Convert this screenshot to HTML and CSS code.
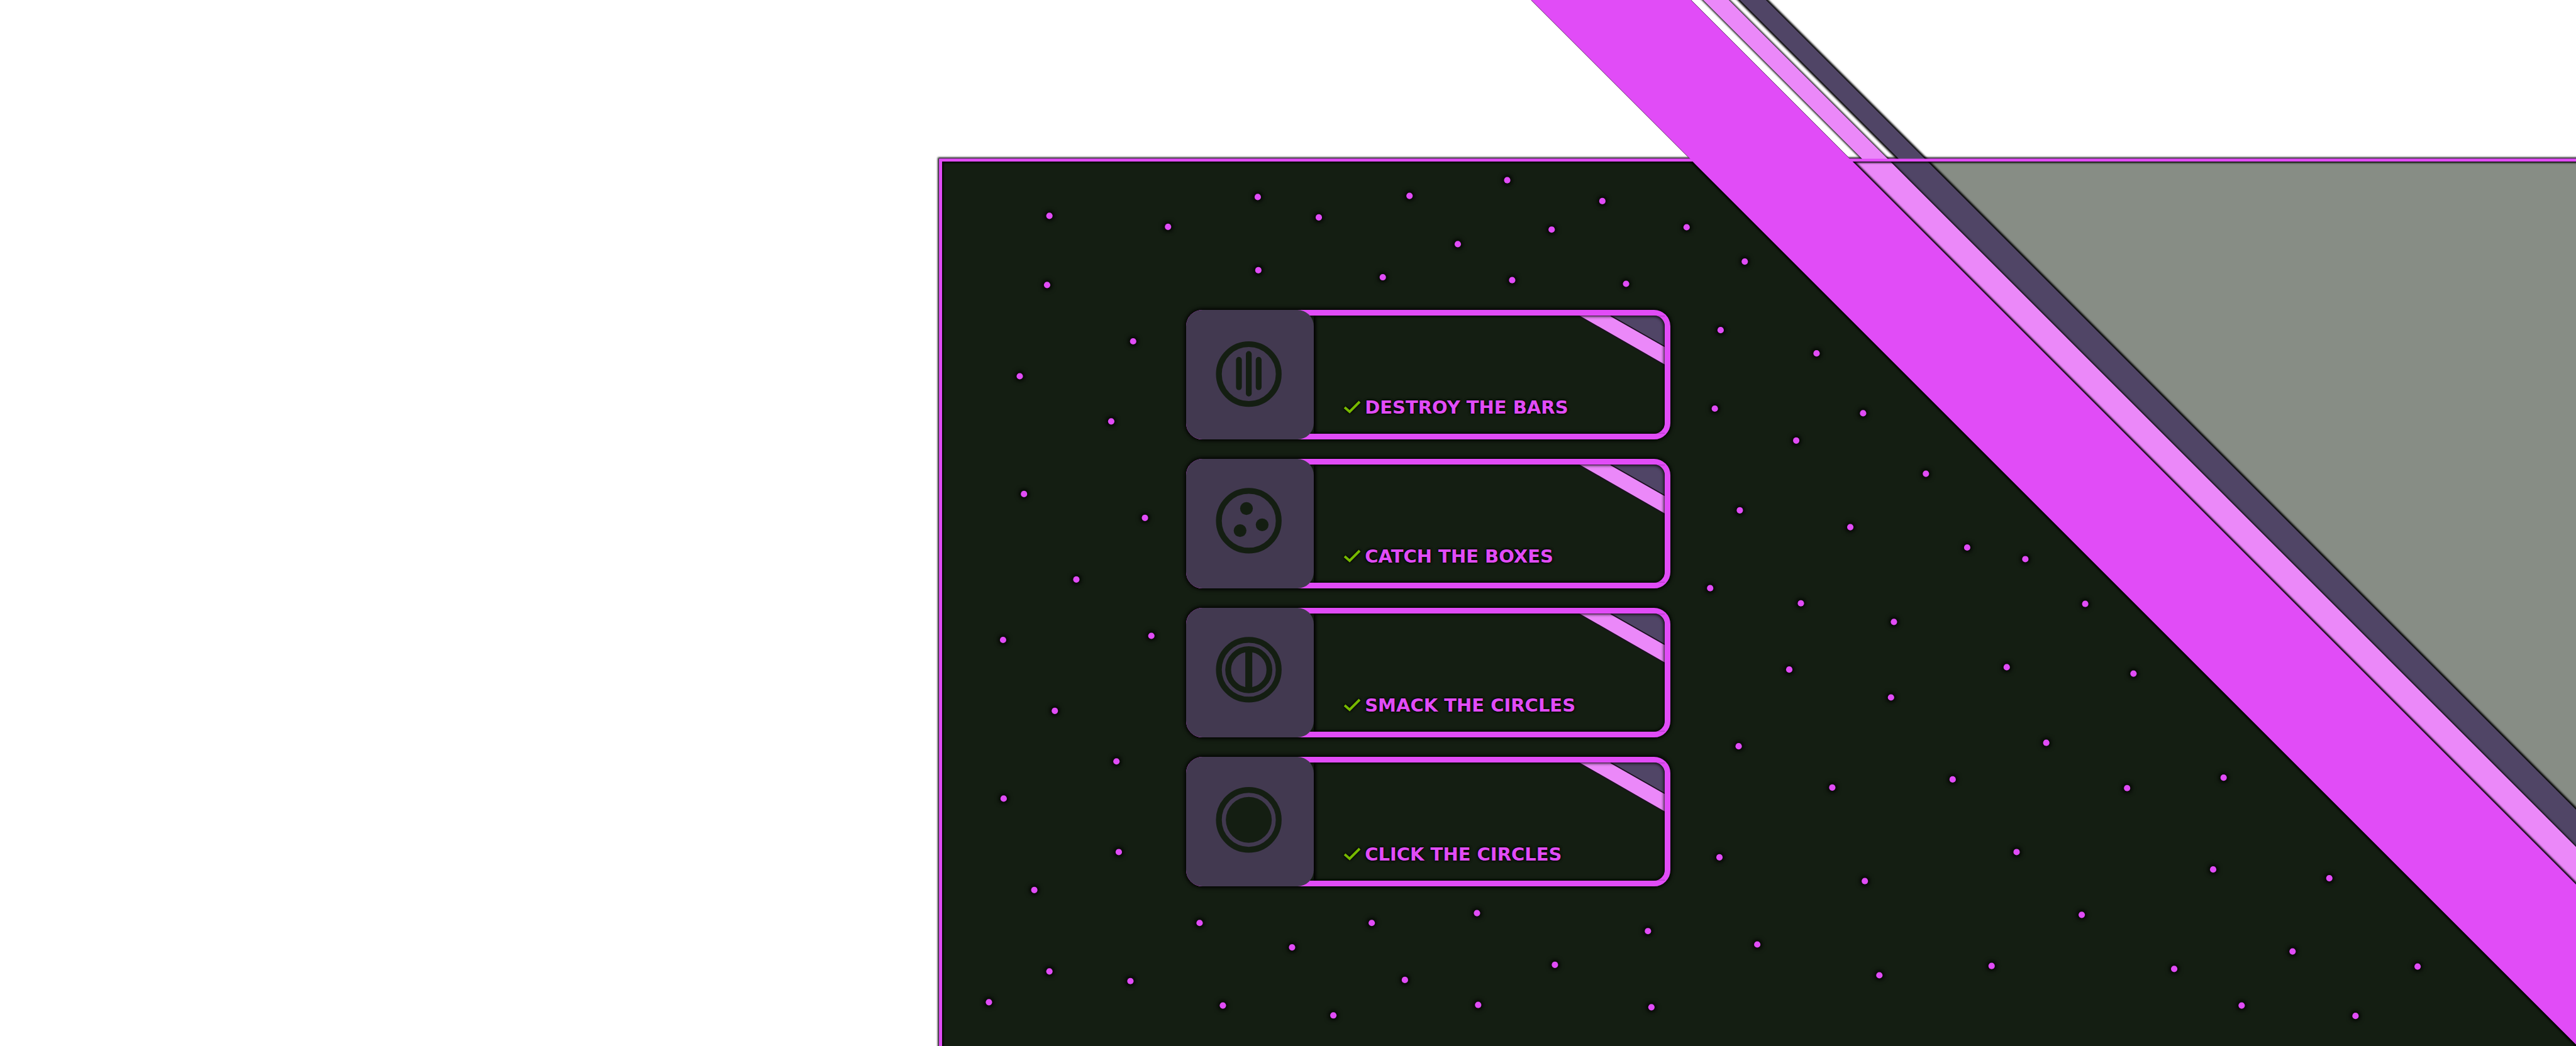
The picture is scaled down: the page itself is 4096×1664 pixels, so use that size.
FILE: index.html
```html
<!DOCTYPE html>
<html lang="en">
<head>
<meta charset="utf-8">
<title>Objectives</title>
<link rel="stylesheet" href="styles.css">
</head>
<body>
<main class="stage">
  <svg class="backdrop" viewBox="0 0 4430 1800" preserveAspectRatio="xMinYMin slice" aria-hidden="true">
    <defs>
      <filter id="soft" x="-5%" y="-5%" width="110%" height="110%" color-interpolation-filters="sRGB">
        <feMorphology in="SourceAlpha" operator="dilate" radius="1"/>
        <feGaussianBlur stdDeviation="2"/>
        <feMerge><feMergeNode/><feMergeNode in="SourceGraphic"/></feMerge>
      </filter>
      <filter id="hard" x="-5%" y="-5%" width="110%" height="110%" color-interpolation-filters="sRGB">
        <feMorphology in="SourceAlpha" operator="dilate" radius="2"/>
        <feGaussianBlur stdDeviation="2"/>
        <feMerge><feMergeNode/><feMergeNode in="SourceGraphic"/></feMerge>
      </filter>
      <filter id="halo" filterUnits="userSpaceOnUse" x="1600" y="260" width="2830" height="1540" color-interpolation-filters="sRGB">
        <feMorphology in="SourceAlpha" operator="dilate" radius="2"/>
        <feGaussianBlur stdDeviation="4"/>
        <feMerge><feMergeNode/><feMergeNode in="SourceGraphic"/></feMerge>
      </filter>
      <clipPath id="above"><rect width="4430" height="275"/></clipPath>
      <clipPath id="inside"><rect x="1618" y="276" width="2812" height="1524"/></clipPath>
    </defs>

    <!-- page background stripes -->
    <path class="edge" filter="url(#hard)" d="M4500 275.500H1617.500V1900"/>
    <path class="paper" d="M1620 278H4430V1800H1620z"/>
    <g clip-path="url(#above)">
      <path class="light" filter="url(#soft)" d="M2909-20H2953L3266 293H3222z"/>
      <path class="slate" filter="url(#hard)" d="M2972-20H3017L3330 293H3285z"/>
    </g>

    <!-- panel interior -->
    <g clip-path="url(#inside)">
      <path class="haze" d="M1620 278H4430V1800H1620z"/>
      <path class="slate" filter="url(#hard)" d="M2883 250H3287L4887 1850H4483z"/>
      <path class="light" filter="url(#soft)" d="M2883 250H3223L4823 1850H4483z"/>
      <path class="night" d="M1620 278H2911L4433 1800H1620z"/>
      <path class="bright" filter="url(#hard)" d="M2883 250H3158L4758 1850H4483z"/>
      <path class="edge" filter="url(#hard)" d="M4500 275.500H1617.500V1900"/>
      <g class="bright" filter="url(#halo)">
        <circle cx="1804.700" cy="371.300" r="5.500"/><circle cx="2008.700" cy="390.300" r="5.500"/><circle cx="1800.700" cy="490.300" r="5.500"/><circle cx="1948.700" cy="587.300" r="5.500"/><circle cx="1753.700" cy="647.300" r="5.500"/>
        <circle cx="2163" cy="339" r="5.500"/><circle cx="2268" cy="374" r="5.500"/><circle cx="2424" cy="337" r="5.500"/><circle cx="2592" cy="310" r="5.500"/><circle cx="2507" cy="420" r="5.500"/>
        <circle cx="2164" cy="465" r="5.500"/><circle cx="2378" cy="477" r="5.500"/><circle cx="2600.500" cy="482" r="5.500"/><circle cx="2668.400" cy="395" r="5.500"/><circle cx="2755.600" cy="346" r="5.500"/>
        <circle cx="2900.500" cy="391" r="5.500"/><circle cx="3000.500" cy="450" r="5.500"/><circle cx="2796.400" cy="488.300" r="5.500"/><circle cx="1911" cy="725" r="5.500"/><circle cx="1761" cy="850" r="5.500"/>
        <circle cx="1969" cy="891" r="5.500"/><circle cx="1851" cy="997" r="5.500"/><circle cx="1725" cy="1101" r="5.500"/><circle cx="1980" cy="1094" r="5.500"/><circle cx="1814" cy="1223" r="5.500"/>
        <circle cx="1920" cy="1310" r="5.500"/><circle cx="1726" cy="1374" r="5.500"/><circle cx="1924" cy="1466" r="5.500"/><circle cx="1778.700" cy="1531.300" r="5.500"/><circle cx="1804.700" cy="1671.300" r="5.500"/>
        <circle cx="1700.700" cy="1724.300" r="5.500"/><circle cx="1944" cy="1688" r="5.500"/><circle cx="2063" cy="1588" r="5.500"/><circle cx="2103" cy="1730" r="5.500"/><circle cx="2222" cy="1630" r="5.500"/>
        <circle cx="2293" cy="1747" r="5.500"/><circle cx="2359" cy="1588" r="5.500"/><circle cx="2416" cy="1686" r="5.500"/><circle cx="2540" cy="1571" r="5.500"/><circle cx="2542" cy="1729" r="5.500"/>
        <circle cx="2674" cy="1660" r="5.500"/><circle cx="2834" cy="1602" r="5.500"/><circle cx="2840" cy="1733" r="5.500"/><circle cx="2957" cy="1475" r="5.500"/><circle cx="3022" cy="1625" r="5.500"/>
        <circle cx="2990" cy="1284" r="5.500"/><circle cx="2941" cy="1012" r="5.500"/><circle cx="2992" cy="878" r="5.500"/><circle cx="2949" cy="703" r="5.500"/><circle cx="2959" cy="568" r="5.500"/>
        <circle cx="3124" cy="608" r="5.500"/><circle cx="3204" cy="711" r="5.500"/><circle cx="3089" cy="758" r="5.500"/><circle cx="3312" cy="815" r="5.500"/><circle cx="3182" cy="907" r="5.500"/>
        <circle cx="3383" cy="942" r="5.500"/><circle cx="3483" cy="962" r="5.500"/><circle cx="3097" cy="1038" r="5.500"/><circle cx="3257" cy="1070" r="5.500"/><circle cx="3586" cy="1039" r="5.500"/>
        <circle cx="3077" cy="1152" r="5.500"/><circle cx="3252" cy="1200" r="5.500"/><circle cx="3451" cy="1148" r="5.500"/><circle cx="3669" cy="1159" r="5.500"/><circle cx="3519" cy="1278" r="5.500"/>
        <circle cx="3151" cy="1355" r="5.500"/><circle cx="3358" cy="1341" r="5.500"/><circle cx="3658" cy="1356" r="5.500"/><circle cx="3824" cy="1338" r="5.500"/><circle cx="3207" cy="1516" r="5.500"/>
        <circle cx="3468" cy="1466" r="5.500"/><circle cx="3806" cy="1496" r="5.500"/><circle cx="4005.800" cy="1511" r="5.500"/><circle cx="3580" cy="1574" r="5.500"/><circle cx="3232" cy="1678" r="5.500"/>
        <circle cx="3425" cy="1662" r="5.500"/><circle cx="3739" cy="1667" r="5.500"/><circle cx="3855" cy="1730" r="5.500"/><circle cx="3942.600" cy="1637" r="5.500"/><circle cx="4050.800" cy="1748" r="5.500"/>
        <circle cx="4157.600" cy="1663" r="5.500"/>
      </g>
    </g>
    <path class="edge" d="M4430 275.500H1617.500V1800"/>
    <path class="bright" d="M2633 0H2908L4708 1800H4433z"/>
    <path class="hairline" d="M2633 0L2906 273M2908 0L3181 273"/>
  </svg>

  <ul class="objectives">
    <li class="card">
      <div class="tile">
        <svg class="icon" viewBox="0 0 219 223" aria-hidden="true">
          <circle class="ring" cx="107.500" cy="110.500" r="51.500"/>
          <path class="bar" d="M90.500 86v47M107.500 76v68M124.500 86v47"/>
        </svg>
      </div>
      <div class="body">
        <svg class="check" viewBox="0 0 28 20" aria-hidden="true"><path d="M2 10L10 17L26 1"/></svg>
        <span class="label">DESTROY THE BARS</span>
      </div>
      <div class="corner"><svg class="ribbon" viewBox="0 0 148 86" aria-hidden="true"><path class="slate" d="M56 0H148V53z"/><path class="light" d="M0 0H55L148 53V85z"/><path class="seam" d="M55 0L148 53M0 0L148 85"/></svg></div>
    </li>
    <li class="card">
      <div class="tile">
        <svg class="icon" viewBox="0 0 219 223" aria-hidden="true">
          <circle class="ring" cx="107.500" cy="106.500" r="51.500"/>
          <circle cx="103.500" cy="85.500" r="11"/><circle cx="130.500" cy="113.500" r="11"/><circle cx="92.500" cy="123.500" r="11"/>
        </svg>
      </div>
      <div class="body">
        <svg class="check" viewBox="0 0 28 20" aria-hidden="true"><path d="M2 10L10 17L26 1"/></svg>
        <span class="label">CATCH THE BOXES</span>
      </div>
      <div class="corner"><svg class="ribbon" viewBox="0 0 148 86" aria-hidden="true"><path class="slate" d="M56 0H148V53z"/><path class="light" d="M0 0H55L148 53V85z"/><path class="seam" d="M55 0L148 53M0 0L148 85"/></svg></div>
    </li>
    <li class="card">
      <div class="tile">
        <svg class="icon" viewBox="0 0 219 223" aria-hidden="true">
          <circle class="ring" cx="107.500" cy="106.500" r="51.500"/>
          <circle class="ring" cx="107.500" cy="106.500" r="35.500"/>
          <path d="M101.500 72h12v69h-12z"/>
        </svg>
      </div>
      <div class="body">
        <svg class="check" viewBox="0 0 28 20" aria-hidden="true"><path d="M2 10L10 17L26 1"/></svg>
        <span class="label">SMACK THE CIRCLES</span>
      </div>
      <div class="corner"><svg class="ribbon" viewBox="0 0 148 86" aria-hidden="true"><path class="slate" d="M56 0H148V53z"/><path class="light" d="M0 0H55L148 53V85z"/><path class="seam" d="M55 0L148 53M0 0L148 85"/></svg></div>
    </li>
    <li class="card">
      <div class="tile">
        <svg class="icon" viewBox="0 0 219 223" aria-hidden="true">
          <circle class="ring" cx="107.500" cy="108.500" r="51.500"/>
          <circle cx="107.500" cy="108.500" r="39.500"/>
        </svg>
      </div>
      <div class="body">
        <svg class="check" viewBox="0 0 28 20" aria-hidden="true"><path d="M2 10L10 17L26 1"/></svg>
        <span class="label">CLICK THE CIRCLES</span>
      </div>
      <div class="corner"><svg class="ribbon" viewBox="0 0 148 86" aria-hidden="true"><path class="slate" d="M56 0H148V53z"/><path class="light" d="M0 0H55L148 53V85z"/><path class="seam" d="M55 0L148 53M0 0L148 85"/></svg></div>
    </li>
  </ul>
</main>
</body>
</html>
```
FILE: styles.css
```css
:root {
  --bright: #e14cf7;
  --light: #eb88f9;
  --slate: #504566;
  --tile: #423950;
  --night: #141e12;
  --haze: #878d85;
}

* { box-sizing: border-box; }

body {
  margin: 0;
  background: #fff;
  font-family: "DejaVu Sans", sans-serif;
}

.stage {
  position: relative;
  min-height: 100vh;
  overflow: hidden;
}

.backdrop {
  position: absolute;
  inset: 0;
  width: 100%;
  height: 100%;
}

.bright { fill: var(--bright); }
.light { fill: var(--light); }
.slate { fill: var(--slate); }
.night { fill: var(--night); }
.haze { fill: var(--haze); }
.paper { fill: #fff; }
.edge { fill: none; stroke: var(--bright); stroke-width: 5; }
.hairline { fill: none; stroke: #5a1e63; stroke-width: 1; }

.objectives {
  position: relative;
  display: flex;
  flex-direction: column;
  gap: 31px;
  width: 64.85vw;
  margin: 0;
  padding: 12.03vw 0 0 46.05vw;
  list-style: none;
}

.card {
  position: relative;
  display: flex;
  min-height: 206px;
  border: 9px solid var(--bright);
  border-radius: 26px;
  background: var(--night);
  box-shadow: 0 0 6px 2px #000;
}

.tile {
  position: relative;
  z-index: 1;
  flex: none;
  width: 203px;
  margin: -9px 0 -9px -9px;
  border-radius: 26px;
  background: var(--tile);
}

.icon {
  display: block;
  width: 100%;
  height: 206px;
  fill: var(--night);
}

.ring { fill: none; stroke: var(--night); stroke-width: 10; }
.bar { fill: none; stroke: var(--night); stroke-width: 10; stroke-linecap: round; }

.body {
  display: flex;
  flex: 1;
  align-items: flex-end;
  gap: 6px;
  padding: 0 0 26px 47px;
  box-shadow: inset 5px 0 5px -2px #000;
}

.check {
  flex: none;
  width: 28px;
  height: 20px;
  margin-bottom: 6px;
  overflow: visible;
  fill: none;
  stroke: #76b900;
  stroke-width: 4;
  filter: drop-shadow(0 0 1px #000) drop-shadow(0 0 2px #000);
}

.label {
  color: var(--bright);
  font-size: 29px;
  font-weight: 700;
  line-height: 32px;
  white-space: nowrap;
  text-shadow: 0 0 4px #000, 0 0 4px #000;
}

.corner {
  position: absolute;
  inset: 0;
  overflow: hidden;
  border-radius: 17px;
}

.corner::after {
  content: "";
  position: absolute;
  inset: 0;
  border-radius: 17px;
  box-shadow: inset 0 0 5px 1px #000;
}

.ribbon {
  display: block;
  width: 137px;
  height: 80px;
  margin-left: auto;
}

.seam { fill: none; stroke: #1b1020; stroke-width: 2; }
```
